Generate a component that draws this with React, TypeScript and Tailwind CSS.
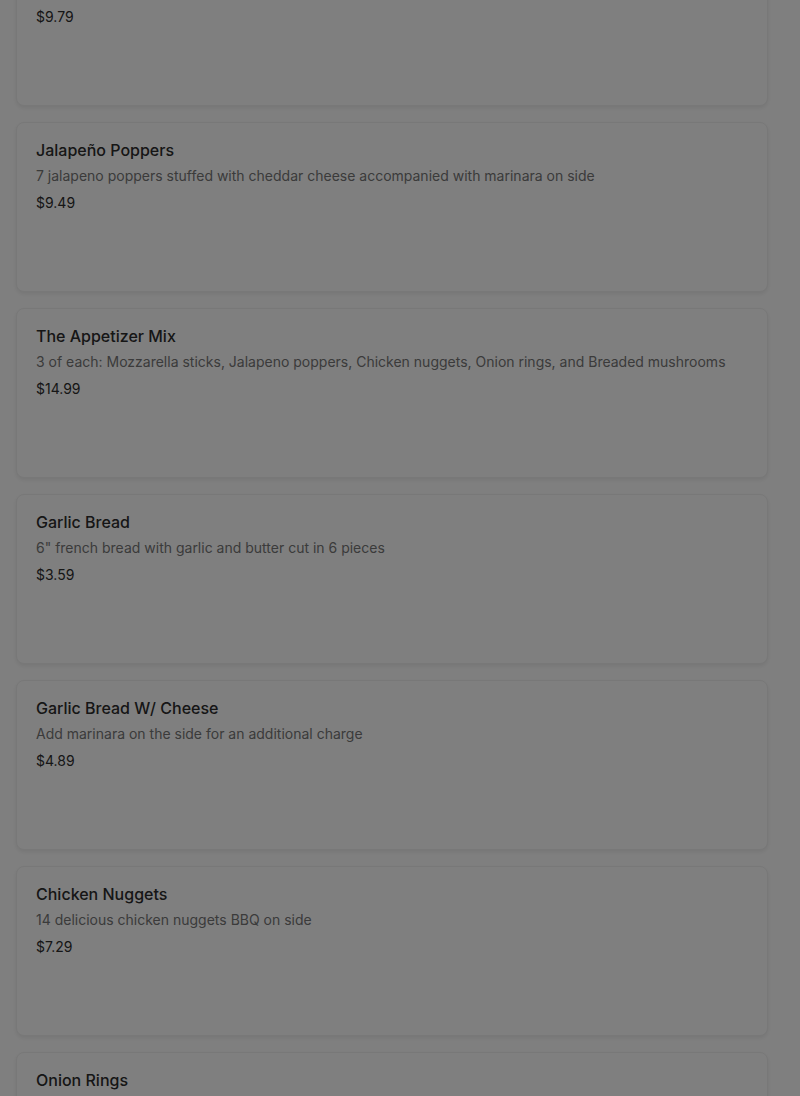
import React from 'react';

type Item = { name: string; description: string; price: string };

const items: Item[] = [
  { name: 'Mozzarella Sticks', description: '7 mozzarella sticks with marinara on side', price: '$9.79' },
  { name: 'Jalapeño Poppers', description: '7 jalapeno poppers stuffed with cheddar cheese accompanied with marinara on side', price: '$9.49' },
  { name: 'The Appetizer Mix', description: '3 of each: Mozzarella sticks, Jalapeno poppers, Chicken nuggets, Onion rings, and Breaded mushrooms', price: '$14.99' },
  { name: 'Garlic Bread', description: '6" french bread with garlic and butter cut in 6 pieces', price: '$3.59' },
  { name: 'Garlic Bread W/ Cheese', description: 'Add marinara on the side for an additional charge', price: '$4.89' },
  { name: 'Chicken Nuggets', description: '14 delicious chicken nuggets BBQ on side', price: '$7.29' },
  { name: 'Onion Rings', description: 'Crispy battered onion rings', price: '$5.99' },
];

const MenuCard = ({ item }: { item: Item }) => (
  <div className="h-[170px] rounded-lg bg-white border border-[#f0f0f0] shadow-[0_2px_4px_rgba(0,0,0,0.08)] px-[19px] pt-[15px]">
    <h3 className="text-[16px] leading-6 font-medium text-[#2d2d2d]">{item.name}</h3>
    <p className="mt-[4px] text-[14px] leading-5 text-[#767676] whitespace-nowrap">{item.description}</p>
    <p className="mt-[7px] text-[14px] leading-5 text-[#2d2d2d]">{item.price}</p>
  </div>
);

export default function App() {
  return (
    <div className="relative h-[1096px] overflow-hidden bg-white" style={{ fontFamily: 'Inter, "Noto Sans", sans-serif' }}>
      <div className="-mt-[64px] ml-4 w-[752px] flex flex-col gap-4">
        {items.map(item => (
          <MenuCard key={item.name} item={item} />
        ))}
      </div>
      {/* modal backdrop */}
      <div className="fixed inset-0 bg-black/50" />
    </div>
  );
}
